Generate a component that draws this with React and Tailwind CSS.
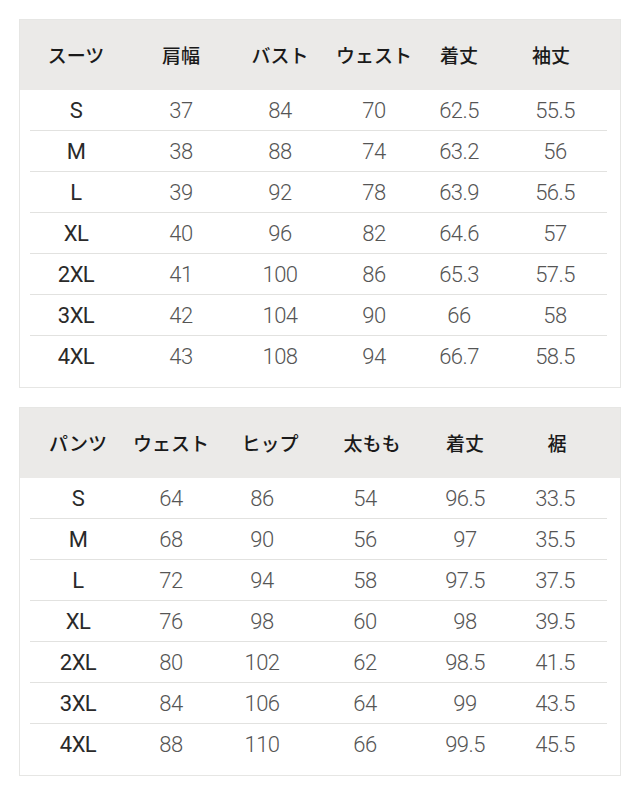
import React from 'react';

const suits = {
  head: ['スーツ', '肩幅', 'バスト', 'ウェスト', '着丈', '袖丈'],
  rows: [
    ['S', '37', '84', '70', '62.5', '55.5'],
    ['M', '38', '88', '74', '63.2', '56'],
    ['L', '39', '92', '78', '63.9', '56.5'],
    ['XL', '40', '96', '82', '64.6', '57'],
    ['2XL', '41', '100', '86', '65.3', '57.5'],
    ['3XL', '42', '104', '90', '66', '58'],
    ['4XL', '43', '108', '94', '66.7', '58.5'],
  ],
  cols: 'grid-cols-[92px_118px_80px_108px_62px_130px]',
  headShift: ['', '', '', '', '', 'pr-2'],
};

const pants = {
  head: ['パンツ', 'ウェスト', 'ヒップ', '太もも', '着丈', '裾'],
  rows: [
    ['S', '64', '86', '54', '96.5', '33.5'],
    ['M', '68', '90', '56', '97', '35.5'],
    ['L', '72', '94', '58', '97.5', '37.5'],
    ['XL', '76', '98', '60', '98', '39.5'],
    ['2XL', '80', '102', '62', '98.5', '41.5'],
    ['3XL', '84', '106', '64', '99', '43.5'],
    ['4XL', '88', '110', '66', '99.5', '45.5'],
  ],
  cols: 'grid-cols-[96px_90px_92px_114px_86px_94px]',
  headShift: ['', '', 'pl-4', 'pl-3.5', '', 'pl-1'],
};

const jp = { fontFamily: '"Noto Sans CJK JP", "Noto Sans", sans-serif' };
const num = { fontFamily: 'Roboto, "Liberation Sans", sans-serif' };

const SizeTable = ({ data }) => (
  <div className="bg-white border border-[#e6e6e4]">
    {/* header */}
    <div className="h-[70px] bg-[#ebeae8] px-[10px] flex items-center">
      <div className={`grid ${data.cols} w-full`}>
        {data.head.map((h, i) => (
          <div
            key={i}
            className={`text-center text-[19px] font-medium text-[#1a1a1a] whitespace-nowrap ${data.headShift[i]}`}
            style={jp}
          >
            {h}
          </div>
        ))}
      </div>
    </div>

    {/* rows */}
    <div className="pl-[10px] pr-[13px] pb-[10px]">
      {data.rows.map((r, ri) => (
        <div
          key={ri}
          className={`h-[41px] flex items-center ${ri < data.rows.length - 1 ? 'border-b border-[#e2e2e0]' : ''}`}
        >
          <div className={`grid ${data.cols} w-full`}>
            {r.map((c, ci) => (
              <div
                key={ci}
                className={`text-center text-[22px] tracking-tight whitespace-nowrap ${
                  ci === 0 ? 'text-[#2a2a2a] font-normal' : 'text-[#555555] font-light'
                }`}
                style={num}
              >
                {c}
              </div>
            ))}
          </div>
        </div>
      ))}
    </div>
  </div>
);

const App = () => {
  return (
    <div className="w-[640px] min-h-[797px] bg-white pt-[19px] pl-[19px] pr-[19px] flex flex-col gap-[19px]">
      <SizeTable data={suits} />
      <SizeTable data={pants} />
    </div>
  );
};

export default App;
